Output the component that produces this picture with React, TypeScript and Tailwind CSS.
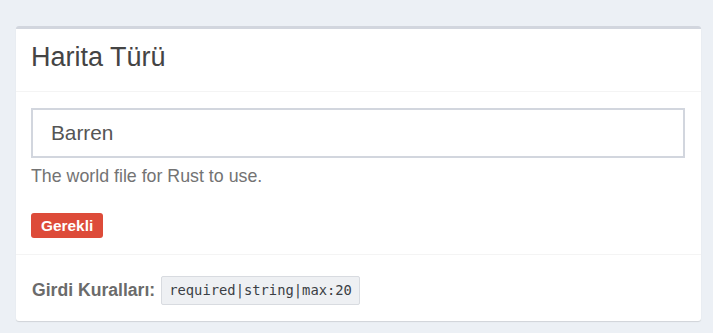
export default function App() {
    return (
        <div className="min-h-screen bg-[#ecf0f5] pt-[26px] pl-4" style={{ fontFamily: '"Liberation Sans", Arial, sans-serif' }}>
            <div className="w-[685px] bg-white rounded-[3px] border-t-[3px] border-[#d2d6de] shadow-[0_1px_1px_rgba(0,0,0,0.12)]">
                {/* Header */}
                <div className="h-[63px] border-b border-[#f4f4f4] pt-[15px] px-[15px]">
                    <h3 className="text-[27px] leading-none text-[#444]">Harita Türü</h3>
                </div>

                {/* Body */}
                <div className="pt-[16px] px-[15px] pb-[16px] border-b border-[#f4f4f4]">
                    <div className="h-[50px] w-[654px] border-2 border-[#d2d6de] flex items-center pl-[18px] text-[20.8px] text-[#555]">
                        Barren
                    </div>
                    <p className="mt-[6px] text-[17.8px] leading-[25px] text-[#737373]">The world file for Rust to use.</p>
                    <span className="mt-[24px] inline-flex items-center h-[25px] px-[10px] rounded-[3px] bg-[#dd4b39] text-white font-bold text-[15.4px] leading-none">
                        Gerekli
                    </span>
                </div>

                {/* Footer */}
                <div className="pt-[21px] pb-[16px] px-[15px] flex items-center gap-[6px]">
                    <span className="font-bold text-[17.6px] text-[#6b6b6b] leading-none pl-[1px]">Girdi Kuralları:</span>
                    <code
                        className="h-[29px] inline-flex items-center px-[7px] bg-[#eef0f3] border border-[#d8dbe0] rounded-[2px] text-[13.8px] text-[#3b3f45]"
                        style={{ fontFamily: '"DejaVu Sans Mono", "Liberation Mono", monospace' }}
                    >
                        required|string|max:20
                    </code>
                </div>
            </div>
        </div>
    );
}
